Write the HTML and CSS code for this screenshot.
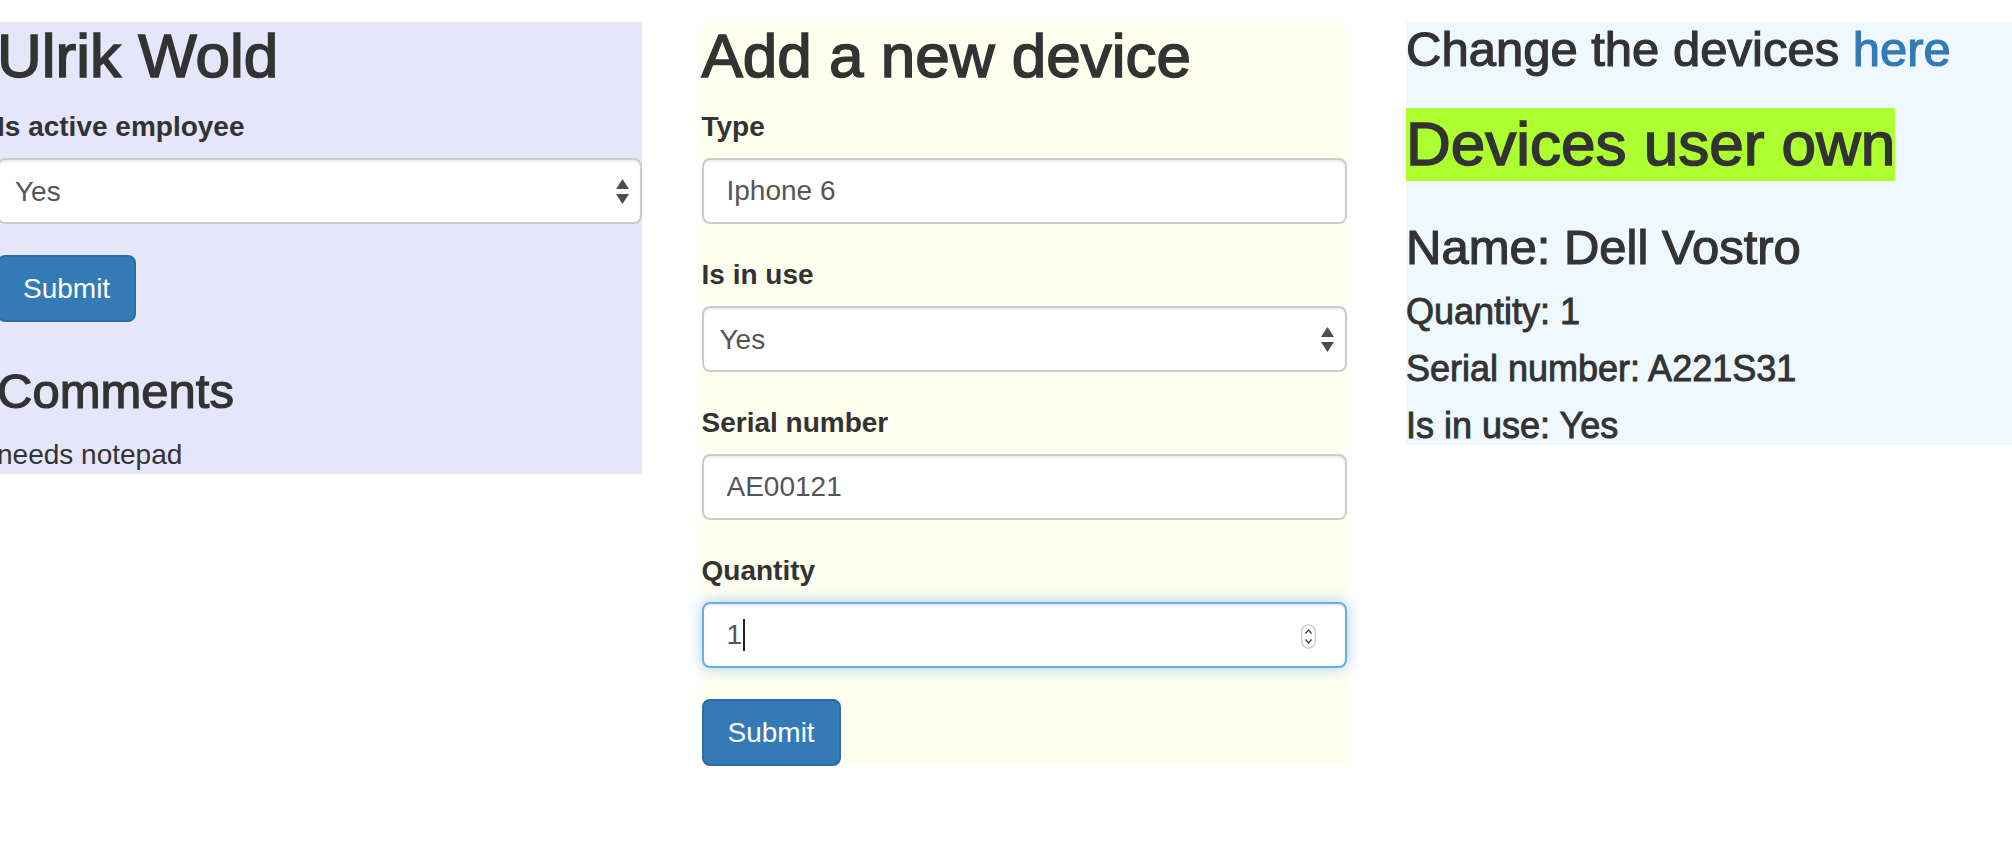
FILE: index.html
```html
<!DOCTYPE html>
<html lang="en">
<head>
<meta charset="utf-8">
<title>Ulrik Wold – devices</title>
<link rel="stylesheet" href="styles.css">
</head>
<body>
<div class="page">
  <div class="row">
    <section class="panel panel-user">
      <h2 class="h2">Ulrik Wold</h2>
      <form class="form">
        <div class="form-group">
          <label class="label" for="active">Is active employee</label>
          <div class="select-wrap">
            <select class="form-control select" id="active"><option>Yes</option><option>No</option></select>
            <svg class="select-arrows" width="13" height="25" viewBox="0 0 13 25" aria-hidden="true"><path d="M0 10 L6.5 0 L13 10 Z M0 15 L13 15 L6.5 25 Z" fill="#4d4d4d"/></svg>
          </div>
        </div>
        <button class="btn" type="button">Submit</button>
      </form>
      <h3 class="h3">Comments</h3>
      <p class="text">needs notepad</p>
    </section>

    <section class="panel panel-add">
      <h2 class="h2">Add a new device</h2>
      <form class="form">
        <div class="form-group">
          <label class="label" for="type">Type</label>
          <input class="form-control" id="type" type="text" value="Iphone 6">
        </div>
        <div class="form-group">
          <label class="label" for="inuse">Is in use</label>
          <div class="select-wrap">
            <select class="form-control select" id="inuse"><option>Yes</option><option>No</option></select>
            <svg class="select-arrows" width="13" height="25" viewBox="0 0 13 25" aria-hidden="true"><path d="M0 10 L6.5 0 L13 10 Z M0 15 L13 15 L6.5 25 Z" fill="#4d4d4d"/></svg>
          </div>
        </div>
        <div class="form-group">
          <label class="label" for="serial">Serial number</label>
          <input class="form-control" id="serial" type="text" value="AE00121">
        </div>
        <div class="form-group">
          <label class="label" for="qty">Quantity</label>
          <div class="number-wrap">
            <input class="form-control is-focused" id="qty" type="text" value="1">
            <span class="caret"></span>
            <svg class="spinner" width="15" height="25" viewBox="0 0 15 25" aria-hidden="true">
              <rect x="0.75" y="0.75" width="13.5" height="23.5" rx="6.75" fill="#fff" stroke="#c4c4c4" stroke-width="1.2"/>
              <path d="M4.5 9.5 L7.5 6 L10.5 9.5" fill="none" stroke="#444" stroke-width="1.4"/>
              <path d="M4.5 15.5 L7.5 19 L10.5 15.5" fill="none" stroke="#444" stroke-width="1.4"/>
            </svg>
          </div>
        </div>
        <button class="btn" type="button">Submit</button>
      </form>
    </section>

    <section class="panel panel-devices">
      <h3 class="h3">Change the devices <a class="link" href="#">here</a></h3>
      <h2 class="h2"><span class="highlight">Devices user own</span></h2>
      <h3 class="h3">Name: Dell Vostro</h3>
      <h4 class="h4">Quantity: 1</h4>
      <h4 class="h4">Serial number: A221S31</h4>
      <h4 class="h4">Is in use: Yes</h4>
    </section>
  </div>
</div>
</body>
</html>
```

FILE: styles.css
```css
* {
  box-sizing: border-box;
}

html, body {
  margin: 0;
  padding: 0;
  background: #fff;
}

body {
  font-family: "Liberation Sans", Arial, sans-serif;
  font-size: 28px;
  line-height: 39px;
  color: #333;
  overflow: hidden;
}

.page {
  padding-top: 22px;
  width: 2012px;
  overflow: hidden;
}

.row {
  display: grid;
  grid-template-columns: 645px 645px 645px;
  column-gap: 59.5px;
  align-items: start;
  margin-left: -3px;
}

.panel {
  display: flow-root;
}

.panel-user {
  background: #e6e6fa;
}

.panel-add {
  background: #fffff0;
}

.panel-devices {
  background: #f0f8ff;
}

.h2 {
  font-size: 62px;
  line-height: 68px;
  font-weight: 500;
  margin: 34px 0 17px;
  -webkit-text-stroke: 1.6px currentColor;
}

.h3 {
  font-size: 49px;
  line-height: 54px;
  font-weight: 500;
  margin: 42px 0 17px;
  -webkit-text-stroke: 1.2px currentColor;
}

.h4 {
  font-size: 36px;
  line-height: 39px;
  font-weight: 500;
  margin: 18px 0;
  -webkit-text-stroke: 0.9px currentColor;
}

.panel > :first-child {
  margin-top: 0;
}

.panel > :last-child {
  margin-bottom: 0;
}

.text {
  margin: 0;
}

.link {
  color: #337ab7;
  text-decoration: none;
}

.highlight {
  background: #adff2f;
  padding: 1px 0 3px;
}

.form {
  margin: 0;
}

.form-group {
  margin-bottom: 31px;
}

.label {
  display: block;
  font-weight: 700;
  line-height: 40px;
  margin-bottom: 11px;
}

.form-control {
  display: block;
  width: 100%;
  height: 66px;
  padding: 0 23px;
  font-family: inherit;
  font-size: 28px;
  color: #555;
  background: #fff;
  border: 2px solid #ccc;
  border-radius: 8px;
  box-shadow: inset 0 2px 2px rgba(0, 0, 0, 0.075);
  outline: none;
}

.select {
  -webkit-appearance: none;
  appearance: none;
  padding-left: 16px;
}

.select-wrap,
.number-wrap {
  position: relative;
}

.select-arrows {
  position: absolute;
  right: 13px;
  top: 21px;
  pointer-events: none;
}

.is-focused {
  border-color: #66afe9;
  box-shadow: inset 0 2px 2px rgba(0, 0, 0, 0.075), 0 0 16px rgba(102, 175, 233, 0.6);
}

.caret {
  position: absolute;
  left: 41px;
  top: 17px;
  width: 2px;
  height: 32px;
  background: #222;
}

.spinner {
  position: absolute;
  right: 31px;
  top: 22px;
}

.btn {
  display: inline-block;
  height: 67px;
  padding: 0 24px;
  font-family: inherit;
  font-size: 28px;
  line-height: 39px;
  color: #fff;
  background: #337ab7;
  border: 2px solid #2e6da4;
  border-radius: 8px;
  cursor: pointer;
}
```
